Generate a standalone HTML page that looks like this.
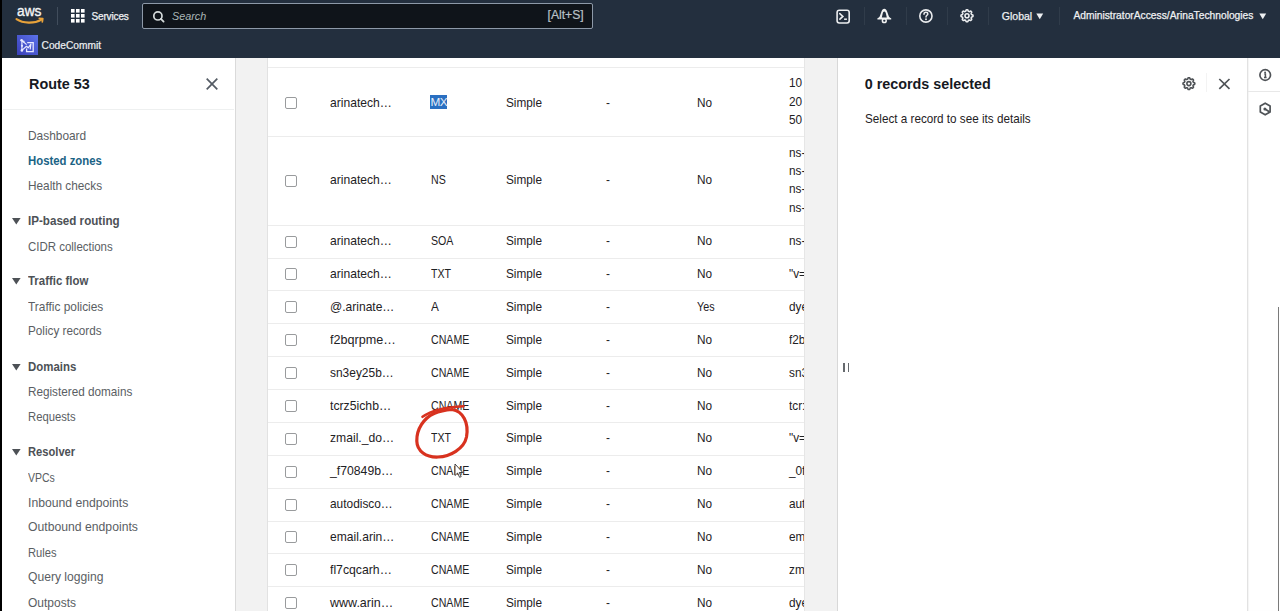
<!DOCTYPE html>
<html><head><meta charset="utf-8"><title>Route 53</title><style>
*{margin:0;padding:0;box-sizing:border-box}
html,body{width:1280px;height:611px;overflow:hidden;background:#fff;font-family:"Liberation Sans",sans-serif}
.t{position:absolute;white-space:nowrap;line-height:1}
.vsep{position:absolute;width:1px}
#nav{position:absolute;left:0;top:0;width:1280px;height:58px;background:#232f3e}
#search{position:absolute;left:142px;top:3px;width:451px;height:25.5px;background:#0f141a;border:1px solid #8d99a8;border-radius:2px}
#leftstrip{position:absolute;left:0;top:0;width:2px;height:611px;background:#000;z-index:5}
#lnav{position:absolute;left:0;top:58px;width:235px;height:553px;background:#fff}
#gut1{position:absolute;left:235px;top:58px;width:33px;height:553px;background:#f2f2f2;border-left:1px solid #dadada;border-right:1px solid #e2e2e2}
#tbl{position:absolute;left:268px;top:58px;width:537px;height:553px;background:#fff}
#gut2{z-index:3;position:absolute;left:804px;top:58px;width:34px;height:553px;background:#f2f2f2;border-left:1px solid #e6e6e6;border-right:1px solid #d8d8d8}
#rpanel{position:absolute;left:838px;top:58px;width:410px;height:553px;background:#fff}
#rail{position:absolute;left:1247px;top:58px;width:33px;height:553px;background:#fff;border-left:1px solid #e2e2e2;box-shadow:inset 1px 0 1px #f4f4f4}
.hl{position:absolute;left:268px;width:537px;height:1px;background:#ececec}
.cb{position:absolute;left:284.8px;width:12px;height:12px;border:1.5px solid #999b9d;border-radius:2px;background:#fff}
</style></head>
<body>
<div id="nav"></div><svg style="position:absolute;left:14px;top:4px" width="32" height="22" viewBox="0 0 32 22">
<text x="3" y="12.3" font-family="Liberation Sans" font-size="14" fill="#f4f5f6" textLength="24.5" lengthAdjust="spacingAndGlyphs" stroke="#f4f5f6" stroke-width="0.35">aws</text>
<path d="M2.5 15.2 C9 19.5 20 20 27.5 15.6" stroke="#e8a23a" stroke-width="2.1" fill="none" stroke-linecap="round"/>
<path d="M25.3 14.3 L28.8 14.6 L28.3 17.8" stroke="#e8a23a" stroke-width="1.7" fill="none" stroke-linecap="round" stroke-linejoin="round"/>
</svg><div class="vsep" style="left:57px;top:7px;height:18px;background:#414d5c"></div><svg style="position:absolute;left:71px;top:9.2px" width="14" height="14"><rect x="0" y="0" width="3.6" height="3.6" fill="#fff"/><rect x="5" y="0" width="3.6" height="3.6" fill="#fff"/><rect x="10" y="0" width="3.6" height="3.6" fill="#fff"/><rect x="0" y="5" width="3.6" height="3.6" fill="#fff"/><rect x="5" y="5" width="3.6" height="3.6" fill="#fff"/><rect x="10" y="5" width="3.6" height="3.6" fill="#fff"/><rect x="0" y="10" width="3.6" height="3.6" fill="#fff"/><rect x="5" y="10" width="3.6" height="3.6" fill="#fff"/><rect x="10" y="10" width="3.6" height="3.6" fill="#fff"/></svg><div class="t" style="left:91.5px;top:12.04px;font-size:10.00px;font-weight:normal;color:#eef0f2;font-style:normal;letter-spacing:-0.15px;-webkit-text-stroke:0.25px #eef0f2">Services</div>
<div id="search"></div><svg style="position:absolute;left:151.5px;top:9.5px" width="14" height="14" viewBox="0 0 14 14">
<circle cx="5.9" cy="5.9" r="4.1" stroke="#d5dbdb" stroke-width="1.7" fill="none"/>
<path d="M8.9 8.9 L11.6 11.6" stroke="#d5dbdb" stroke-width="1.8" stroke-linecap="round"/></svg><div class="t" style="left:172px;top:11.06px;font-size:10.80px;font-weight:normal;color:#aab7b8;font-style:italic;">Search</div>
<div class="t" style="left:547.5px;top:8.97px;font-size:12.20px;font-weight:normal;color:#b9c0c7;font-style:normal;-webkit-text-stroke:0.2px #b9c0c7">[Alt+S]</div>
<svg style="position:absolute;left:835px;top:8.5px" width="16" height="16" viewBox="0 0 16 16">
<rect x="2.1" y="1.2" width="12.1" height="12.8" rx="2.2" stroke="#eceef0" stroke-width="1.6" fill="none"/>
<path d="M4.8 4.6 L7.9 7.4 L4.9 10.2" stroke="#eceef0" stroke-width="1.6" fill="none" stroke-linecap="round"/>
<path d="M9.1 10.2 H11.9" stroke="#eceef0" stroke-width="1.5"/></svg><div class="vsep" style="left:863.5px;top:7px;height:18px;background:#303c4a"></div><svg style="position:absolute;left:870px;top:4px" width="30" height="24" viewBox="0 0 30 24">
<path fill-rule="evenodd" fill="#f2f3f3" d="M14.3 4.8 C15.6 4.8 16.6 5.8 17.2 7.8 L18.8 12.2 C19.3 13.2 20.3 13.8 21.2 14.2 L21.2 15.5 L7.4 15.5 L7.4 14.2 C8.3 13.8 9.3 13.2 9.8 12.2 L11.4 7.8 C12 5.8 13 4.8 14.3 4.8 Z M14.3 7.4 C13.5 7.4 13 8.2 12.7 9.4 L11.8 13.5 L16.8 13.5 L15.9 9.4 C15.6 8.2 15.1 7.4 14.3 7.4 Z"/>
<circle cx="14.3" cy="16.7" r="1.9" stroke="#f2f3f3" stroke-width="1.5" fill="none"/></svg><div class="vsep" style="left:905.5px;top:7px;height:18px;background:#303c4a"></div><svg style="position:absolute;left:918px;top:8.3px" width="16" height="16" viewBox="0 0 16 16">
<circle cx="7.9" cy="8" r="6.1" stroke="#e9ebed" stroke-width="1.6" fill="none"/>
<path d="M6 6.3 C6 5 6.9 4.3 7.9 4.3 C9 4.3 9.8 5 9.8 6 C9.8 7.2 8 7.4 8 8.9" stroke="#e9ebed" stroke-width="1.5" fill="none" stroke-linecap="round"/>
<circle cx="8" cy="11.2" r="0.95" fill="#e9ebed"/></svg><div class="vsep" style="left:946.5px;top:7px;height:18px;background:#303c4a"></div><svg style="position:absolute;left:959px;top:8px" width="16" height="16" viewBox="0 0 16 16"><path d="M8.00 1.80 L8.24 1.81 L8.47 1.84 L8.70 1.92 L8.90 2.13 L9.04 2.55 L9.16 2.98 L9.30 3.20 L9.46 3.31 L9.63 3.39 L9.80 3.46 L9.97 3.53 L10.14 3.59 L10.33 3.63 L10.59 3.57 L10.97 3.35 L11.38 3.15 L11.67 3.15 L11.88 3.25 L12.07 3.40 L12.24 3.56 L12.40 3.73 L12.55 3.92 L12.65 4.13 L12.65 4.42 L12.45 4.83 L12.23 5.21 L12.17 5.47 L12.21 5.66 L12.27 5.83 L12.34 6.00 L12.41 6.17 L12.49 6.34 L12.60 6.50 L12.82 6.64 L13.25 6.76 L13.67 6.90 L13.88 7.10 L13.96 7.33 L13.99 7.56 L14.00 7.80 L13.99 8.04 L13.96 8.27 L13.88 8.50 L13.67 8.70 L13.25 8.84 L12.82 8.96 L12.60 9.10 L12.49 9.26 L12.41 9.43 L12.34 9.60 L12.27 9.77 L12.21 9.94 L12.17 10.13 L12.23 10.39 L12.45 10.77 L12.65 11.18 L12.65 11.47 L12.55 11.68 L12.40 11.87 L12.24 12.04 L12.07 12.20 L11.88 12.35 L11.67 12.45 L11.38 12.45 L10.97 12.25 L10.59 12.03 L10.33 11.97 L10.14 12.01 L9.97 12.07 L9.80 12.14 L9.63 12.21 L9.46 12.29 L9.30 12.40 L9.16 12.62 L9.04 13.05 L8.90 13.47 L8.70 13.68 L8.47 13.76 L8.24 13.79 L8.00 13.80 L7.76 13.79 L7.53 13.76 L7.30 13.68 L7.10 13.47 L6.96 13.05 L6.84 12.62 L6.70 12.40 L6.54 12.29 L6.37 12.21 L6.20 12.14 L6.03 12.07 L5.86 12.01 L5.67 11.97 L5.41 12.03 L5.03 12.25 L4.62 12.45 L4.33 12.45 L4.12 12.35 L3.93 12.20 L3.76 12.04 L3.60 11.87 L3.45 11.68 L3.35 11.47 L3.35 11.18 L3.55 10.77 L3.77 10.39 L3.83 10.13 L3.79 9.94 L3.73 9.77 L3.66 9.60 L3.59 9.43 L3.51 9.26 L3.40 9.10 L3.18 8.96 L2.75 8.84 L2.33 8.70 L2.12 8.50 L2.04 8.27 L2.01 8.04 L2.00 7.80 L2.01 7.56 L2.04 7.33 L2.12 7.10 L2.33 6.90 L2.75 6.76 L3.18 6.64 L3.40 6.50 L3.51 6.34 L3.59 6.17 L3.66 6.00 L3.73 5.83 L3.79 5.66 L3.83 5.47 L3.77 5.21 L3.55 4.83 L3.35 4.42 L3.35 4.13 L3.45 3.92 L3.60 3.73 L3.76 3.56 L3.93 3.40 L4.12 3.25 L4.33 3.15 L4.62 3.15 L5.03 3.35 L5.41 3.57 L5.67 3.63 L5.86 3.59 L6.03 3.53 L6.20 3.46 L6.37 3.39 L6.54 3.31 L6.70 3.20 L6.84 2.98 L6.96 2.55 L7.10 2.13 L7.30 1.92 L7.53 1.84 L7.76 1.81 Z" stroke="#eceef0" stroke-width="1.6" fill="none" stroke-linejoin="round"/><circle cx="8" cy="7.8" r="2.0" stroke="#eceef0" stroke-width="1.6" fill="none"/></svg><div class="vsep" style="left:987.5px;top:7px;height:18px;background:#303c4a"></div><div class="t" style="left:1001.8px;top:10.81px;font-size:10.50px;font-weight:normal;color:#eef0f2;font-style:normal;-webkit-text-stroke:0.25px #eef0f2">Global</div>
<svg style="position:absolute;left:1035.8px;top:13px" width="8" height="7"><path d="M0.3 0.5 H7.2 L3.75 6.2 Z" fill="#eef0f2"/></svg><div class="vsep" style="left:1058.5px;top:7px;height:18px;background:#303c4a"></div><div class="t" style="left:1073.4px;top:11.02px;font-size:10.25px;font-weight:normal;color:#eef0f2;font-style:normal;-webkit-text-stroke:0.25px #eef0f2">AdministratorAccess/ArinaTechnologies</div>
<svg style="position:absolute;left:1259px;top:13px" width="8" height="7"><path d="M0.3 0.5 H7.2 L3.75 6.2 Z" fill="#eef0f2"/></svg><div style="position:absolute;left:17px;top:35px;width:20.5px;height:20px;background:linear-gradient(45deg,#3a3fb8,#5b72ea)"></div>
<svg style="position:absolute;left:17px;top:35px" width="20" height="20" viewBox="0 0 20 20">
<g fill="#e6e9ff"><circle cx="4.6" cy="5.2" r="1.3"/><circle cx="6.6" cy="6.6" r="1"/><circle cx="5" cy="10.8" r="1.1"/><circle cx="4.9" cy="15.4" r="1.3"/></g>
<path d="M4.6 5.2 L9.6 9.6 M4.9 5.5 L4.9 15.4 M4.9 15.4 L9.5 11.3 L11.2 12.8 L13.9 9 L13.2 14.3" stroke="#e6e9ff" stroke-width="1.2" fill="none" stroke-linejoin="round"/>
<path d="M10.2 7.6 H16.2 V16.6 H9.6 V13.6" stroke="#e6e9ff" stroke-width="1.3" fill="none"/></svg><div class="t" style="left:41.6px;top:40.67px;font-size:10.20px;font-weight:normal;color:#eef0f2;font-style:normal;-webkit-text-stroke:0.2px #eef0f2">CodeCommit</div>
<div id="leftstrip"></div><div id="lnav"></div><div id="gut1"></div><div id="tbl"></div><div id="gut2"></div><div id="rpanel"></div><div id="rail"></div><div style="position:absolute;left:3px;top:109px;width:231px;height:1px;background:#eef0f0"></div><div class="t" style="left:29px;top:76.91px;font-size:14.40px;font-weight:bold;color:#16191f;font-style:normal;">Route 53</div>
<svg style="position:absolute;left:204.5px;top:77px" width="14" height="14" viewBox="0 0 14 14">
<path d="M1.7 1.7 L12.3 12.3 M12.3 1.7 L1.7 12.3" stroke="#545b64" stroke-width="1.7"/></svg><div class="t" style="left:28.4px;top:128.61px;font-size:12.98px;font-weight:normal;color:#5a5e63;font-style:normal;transform:scaleX(0.9173);transform-origin:0 0;">Dashboard</div>
<div class="t" style="left:28.2px;top:154.99px;font-size:12.30px;font-weight:bold;color:#1b6385;font-style:normal;transform:scaleX(0.9235);transform-origin:0 0;">Hosted zones</div>
<div class="t" style="left:28.4px;top:178.61px;font-size:12.98px;font-weight:normal;color:#5a5e63;font-style:normal;transform:scaleX(0.9091);transform-origin:0 0;">Health checks</div>
<div class="t" style="left:27.6px;top:215.49px;font-size:12.30px;font-weight:bold;color:#4d5156;font-style:normal;transform:scaleX(0.9441);transform-origin:0 0;">IP-based routing</div>
<svg style="position:absolute;left:12.4px;top:218.20px" width="9" height="7"><path d="M0 0 H8.6 L4.3 6.6 Z" fill="#4d5156"/></svg><div class="t" style="left:28.4px;top:239.61px;font-size:12.98px;font-weight:normal;color:#5a5e63;font-style:normal;transform:scaleX(0.8836);transform-origin:0 0;">CIDR collections</div>
<div class="t" style="left:27.6px;top:274.99px;font-size:12.30px;font-weight:bold;color:#4d5156;font-style:normal;transform:scaleX(0.9292);transform-origin:0 0;">Traffic flow</div>
<svg style="position:absolute;left:12.4px;top:277.70px" width="9" height="7"><path d="M0 0 H8.6 L4.3 6.6 Z" fill="#4d5156"/></svg><div class="t" style="left:28.4px;top:299.91px;font-size:12.98px;font-weight:normal;color:#5a5e63;font-style:normal;transform:scaleX(0.9164);transform-origin:0 0;">Traffic policies</div>
<div class="t" style="left:28.4px;top:324.11px;font-size:12.98px;font-weight:normal;color:#5a5e63;font-style:normal;transform:scaleX(0.9045);transform-origin:0 0;">Policy records</div>
<div class="t" style="left:27.6px;top:361.09px;font-size:12.30px;font-weight:bold;color:#4d5156;font-style:normal;transform:scaleX(0.9292);transform-origin:0 0;">Domains</div>
<svg style="position:absolute;left:12.4px;top:363.80px" width="9" height="7"><path d="M0 0 H8.6 L4.3 6.6 Z" fill="#4d5156"/></svg><div class="t" style="left:28.4px;top:385.01px;font-size:12.98px;font-weight:normal;color:#5a5e63;font-style:normal;transform:scaleX(0.9045);transform-origin:0 0;">Registered domains</div>
<div class="t" style="left:28.4px;top:410.21px;font-size:12.98px;font-weight:normal;color:#5a5e63;font-style:normal;transform:scaleX(0.8682);transform-origin:0 0;">Requests</div>
<div class="t" style="left:27.6px;top:446.09px;font-size:12.30px;font-weight:bold;color:#4d5156;font-style:normal;transform:scaleX(0.9079);transform-origin:0 0;">Resolver</div>
<svg style="position:absolute;left:12.4px;top:448.80px" width="9" height="7"><path d="M0 0 H8.6 L4.3 6.6 Z" fill="#4d5156"/></svg><div class="t" style="left:28.4px;top:470.81px;font-size:12.98px;font-weight:normal;color:#5a5e63;font-style:normal;transform:scaleX(0.8091);transform-origin:0 0;">VPCs</div>
<div class="t" style="left:28.4px;top:496.01px;font-size:12.98px;font-weight:normal;color:#5a5e63;font-style:normal;transform:scaleX(0.9400);transform-origin:0 0;">Inbound endpoints</div>
<div class="t" style="left:28.4px;top:520.31px;font-size:12.98px;font-weight:normal;color:#5a5e63;font-style:normal;transform:scaleX(0.9409);transform-origin:0 0;">Outbound endpoints</div>
<div class="t" style="left:28.4px;top:545.51px;font-size:12.98px;font-weight:normal;color:#5a5e63;font-style:normal;transform:scaleX(0.8618);transform-origin:0 0;">Rules</div>
<div class="t" style="left:28.4px;top:570.31px;font-size:12.98px;font-weight:normal;color:#5a5e63;font-style:normal;transform:scaleX(0.9336);transform-origin:0 0;">Query logging</div>
<div class="t" style="left:28.4px;top:595.51px;font-size:12.98px;font-weight:normal;color:#5a5e63;font-style:normal;transform:scaleX(0.9245);transform-origin:0 0;">Outposts</div>
<div class="hl" style="top:67.4px"></div><div class="cb" style="top:96.60px"></div><div class="t" style="left:330px;top:95.51px;font-size:12.98px;font-weight:normal;color:#1e2124;font-style:normal;transform:scaleX(0.9336);transform-origin:0 0;">arinatech…</div>
<div style="position:absolute;left:430px;top:94.6px;width:17px;height:14px;background:#2a6fc1"></div><div class="t" style="left:430.5px;top:96.51px;font-size:11.80px;font-weight:normal;color:#e8f0fa;font-style:normal;letter-spacing:-0.6px">MX</div>
<div class="t" style="left:505.5px;top:95.51px;font-size:12.98px;font-weight:normal;color:#1e2124;font-style:normal;transform:scaleX(0.9091);transform-origin:0 0;">Simple</div>
<div class="t" style="left:605.5px;top:95.51px;font-size:12.98px;font-weight:normal;color:#1e2124;font-style:normal;transform:scaleX(0.9091);transform-origin:0 0;">-</div>
<div class="t" style="left:697px;top:95.51px;font-size:12.98px;font-weight:normal;color:#1e2124;font-style:normal;transform:scaleX(0.9091);transform-origin:0 0;">No</div>
<div class="t" style="left:789px;top:76.41px;font-size:12.98px;font-weight:normal;color:#1e2124;font-style:normal;transform:scaleX(0.9091);transform-origin:0 0;">10</div>
<div class="t" style="left:789px;top:94.71px;font-size:12.98px;font-weight:normal;color:#1e2124;font-style:normal;transform:scaleX(0.9091);transform-origin:0 0;">20</div>
<div class="t" style="left:789px;top:113.01px;font-size:12.98px;font-weight:normal;color:#1e2124;font-style:normal;transform:scaleX(0.9091);transform-origin:0 0;">50</div>
<div class="hl" style="top:135.8px"></div><div class="cb" style="top:174.70px"></div><div class="t" style="left:330px;top:173.31px;font-size:12.98px;font-weight:normal;color:#1e2124;font-style:normal;transform:scaleX(0.9336);transform-origin:0 0;">arinatech…</div>
<div class="t" style="left:430.5px;top:173.31px;font-size:12.98px;font-weight:normal;color:#1e2124;font-style:normal;transform:scaleX(0.8182);transform-origin:0 0;">NS</div>
<div class="t" style="left:505.5px;top:173.31px;font-size:12.98px;font-weight:normal;color:#1e2124;font-style:normal;transform:scaleX(0.9091);transform-origin:0 0;">Simple</div>
<div class="t" style="left:605.5px;top:173.31px;font-size:12.98px;font-weight:normal;color:#1e2124;font-style:normal;transform:scaleX(0.9091);transform-origin:0 0;">-</div>
<div class="t" style="left:697px;top:173.31px;font-size:12.98px;font-weight:normal;color:#1e2124;font-style:normal;transform:scaleX(0.9091);transform-origin:0 0;">No</div>
<div class="t" style="left:789px;top:145.86px;font-size:12.98px;font-weight:normal;color:#1e2124;font-style:normal;transform:scaleX(0.9091);transform-origin:0 0;">ns-</div>
<div class="t" style="left:789px;top:164.16px;font-size:12.98px;font-weight:normal;color:#1e2124;font-style:normal;transform:scaleX(0.9091);transform-origin:0 0;">ns-</div>
<div class="t" style="left:789px;top:182.46px;font-size:12.98px;font-weight:normal;color:#1e2124;font-style:normal;transform:scaleX(0.9091);transform-origin:0 0;">ns-</div>
<div class="t" style="left:789px;top:200.76px;font-size:12.98px;font-weight:normal;color:#1e2124;font-style:normal;transform:scaleX(0.9091);transform-origin:0 0;">ns-</div>
<div class="hl" style="top:224.6px"></div><div class="cb" style="top:235.54px"></div><div class="t" style="left:330px;top:234.15px;font-size:12.98px;font-weight:normal;color:#1e2124;font-style:normal;transform:scaleX(0.9336);transform-origin:0 0;">arinatech…</div>
<div class="t" style="left:430.5px;top:234.15px;font-size:12.98px;font-weight:normal;color:#1e2124;font-style:normal;transform:scaleX(0.8182);transform-origin:0 0;">SOA</div>
<div class="t" style="left:505.5px;top:234.15px;font-size:12.98px;font-weight:normal;color:#1e2124;font-style:normal;transform:scaleX(0.9091);transform-origin:0 0;">Simple</div>
<div class="t" style="left:605.5px;top:234.15px;font-size:12.98px;font-weight:normal;color:#1e2124;font-style:normal;transform:scaleX(0.9091);transform-origin:0 0;">-</div>
<div class="t" style="left:697px;top:234.15px;font-size:12.98px;font-weight:normal;color:#1e2124;font-style:normal;transform:scaleX(0.9091);transform-origin:0 0;">No</div>
<div class="t" style="left:789px;top:234.15px;font-size:12.98px;font-weight:normal;color:#1e2124;font-style:normal;transform:scaleX(0.9091);transform-origin:0 0;">ns-</div>
<div class="hl" style="top:257.5px"></div><div class="cb" style="top:268.42px"></div><div class="t" style="left:330px;top:267.03px;font-size:12.98px;font-weight:normal;color:#1e2124;font-style:normal;transform:scaleX(0.9336);transform-origin:0 0;">arinatech…</div>
<div class="t" style="left:430.5px;top:267.03px;font-size:12.98px;font-weight:normal;color:#1e2124;font-style:normal;transform:scaleX(0.8182);transform-origin:0 0;">TXT</div>
<div class="t" style="left:505.5px;top:267.03px;font-size:12.98px;font-weight:normal;color:#1e2124;font-style:normal;transform:scaleX(0.9091);transform-origin:0 0;">Simple</div>
<div class="t" style="left:605.5px;top:267.03px;font-size:12.98px;font-weight:normal;color:#1e2124;font-style:normal;transform:scaleX(0.9091);transform-origin:0 0;">-</div>
<div class="t" style="left:697px;top:267.03px;font-size:12.98px;font-weight:normal;color:#1e2124;font-style:normal;transform:scaleX(0.9091);transform-origin:0 0;">No</div>
<div class="t" style="left:789px;top:267.03px;font-size:12.98px;font-weight:normal;color:#1e2124;font-style:normal;transform:scaleX(0.9091);transform-origin:0 0;">"v=</div>
<div class="hl" style="top:290.4px"></div><div class="cb" style="top:301.30px"></div><div class="t" style="left:330px;top:299.91px;font-size:12.98px;font-weight:normal;color:#1e2124;font-style:normal;transform:scaleX(0.9282);transform-origin:0 0;">@.arinate…</div>
<div class="t" style="left:430.5px;top:299.91px;font-size:12.98px;font-weight:normal;color:#1e2124;font-style:normal;transform:scaleX(0.9091);transform-origin:0 0;">A</div>
<div class="t" style="left:505.5px;top:299.91px;font-size:12.98px;font-weight:normal;color:#1e2124;font-style:normal;transform:scaleX(0.9091);transform-origin:0 0;">Simple</div>
<div class="t" style="left:605.5px;top:299.91px;font-size:12.98px;font-weight:normal;color:#1e2124;font-style:normal;transform:scaleX(0.9091);transform-origin:0 0;">-</div>
<div class="t" style="left:697px;top:299.91px;font-size:12.98px;font-weight:normal;color:#1e2124;font-style:normal;transform:scaleX(0.8273);transform-origin:0 0;">Yes</div>
<div class="t" style="left:789px;top:299.91px;font-size:12.98px;font-weight:normal;color:#1e2124;font-style:normal;transform:scaleX(0.9091);transform-origin:0 0;">dye</div>
<div class="hl" style="top:323.2px"></div><div class="cb" style="top:334.18px"></div><div class="t" style="left:330px;top:332.79px;font-size:12.98px;font-weight:normal;color:#1e2124;font-style:normal;transform:scaleX(0.9709);transform-origin:0 0;">f2bqrpme…</div>
<div class="t" style="left:430.5px;top:332.79px;font-size:12.98px;font-weight:normal;color:#1e2124;font-style:normal;transform:scaleX(0.8182);transform-origin:0 0;">CNAME</div>
<div class="t" style="left:505.5px;top:332.79px;font-size:12.98px;font-weight:normal;color:#1e2124;font-style:normal;transform:scaleX(0.9091);transform-origin:0 0;">Simple</div>
<div class="t" style="left:605.5px;top:332.79px;font-size:12.98px;font-weight:normal;color:#1e2124;font-style:normal;transform:scaleX(0.9091);transform-origin:0 0;">-</div>
<div class="t" style="left:697px;top:332.79px;font-size:12.98px;font-weight:normal;color:#1e2124;font-style:normal;transform:scaleX(0.9091);transform-origin:0 0;">No</div>
<div class="t" style="left:789px;top:332.79px;font-size:12.98px;font-weight:normal;color:#1e2124;font-style:normal;transform:scaleX(0.9091);transform-origin:0 0;">f2b</div>
<div class="hl" style="top:356.1px"></div><div class="cb" style="top:367.06px"></div><div class="t" style="left:330px;top:365.67px;font-size:12.98px;font-weight:normal;color:#1e2124;font-style:normal;transform:scaleX(0.9209);transform-origin:0 0;">sn3ey25b…</div>
<div class="t" style="left:430.5px;top:365.67px;font-size:12.98px;font-weight:normal;color:#1e2124;font-style:normal;transform:scaleX(0.8182);transform-origin:0 0;">CNAME</div>
<div class="t" style="left:505.5px;top:365.67px;font-size:12.98px;font-weight:normal;color:#1e2124;font-style:normal;transform:scaleX(0.9091);transform-origin:0 0;">Simple</div>
<div class="t" style="left:605.5px;top:365.67px;font-size:12.98px;font-weight:normal;color:#1e2124;font-style:normal;transform:scaleX(0.9091);transform-origin:0 0;">-</div>
<div class="t" style="left:697px;top:365.67px;font-size:12.98px;font-weight:normal;color:#1e2124;font-style:normal;transform:scaleX(0.9091);transform-origin:0 0;">No</div>
<div class="t" style="left:789px;top:365.67px;font-size:12.98px;font-weight:normal;color:#1e2124;font-style:normal;transform:scaleX(0.9091);transform-origin:0 0;">sn3</div>
<div class="hl" style="top:389.0px"></div><div class="cb" style="top:399.94px"></div><div class="t" style="left:330px;top:398.55px;font-size:12.98px;font-weight:normal;color:#1e2124;font-style:normal;transform:scaleX(0.9436);transform-origin:0 0;">tcrz5ichb…</div>
<div class="t" style="left:430.5px;top:398.55px;font-size:12.98px;font-weight:normal;color:#1e2124;font-style:normal;transform:scaleX(0.8182);transform-origin:0 0;">CNAME</div>
<div class="t" style="left:505.5px;top:398.55px;font-size:12.98px;font-weight:normal;color:#1e2124;font-style:normal;transform:scaleX(0.9091);transform-origin:0 0;">Simple</div>
<div class="t" style="left:605.5px;top:398.55px;font-size:12.98px;font-weight:normal;color:#1e2124;font-style:normal;transform:scaleX(0.9091);transform-origin:0 0;">-</div>
<div class="t" style="left:697px;top:398.55px;font-size:12.98px;font-weight:normal;color:#1e2124;font-style:normal;transform:scaleX(0.9091);transform-origin:0 0;">No</div>
<div class="t" style="left:789px;top:398.55px;font-size:12.98px;font-weight:normal;color:#1e2124;font-style:normal;transform:scaleX(0.9091);transform-origin:0 0;">tcr:</div>
<div class="hl" style="top:421.9px"></div><div class="cb" style="top:432.82px"></div><div class="t" style="left:330px;top:431.43px;font-size:12.98px;font-weight:normal;color:#1e2124;font-style:normal;transform:scaleX(0.9364);transform-origin:0 0;">zmail._do…</div>
<div class="t" style="left:430.5px;top:431.43px;font-size:12.98px;font-weight:normal;color:#1e2124;font-style:normal;transform:scaleX(0.8182);transform-origin:0 0;">TXT</div>
<div class="t" style="left:505.5px;top:431.43px;font-size:12.98px;font-weight:normal;color:#1e2124;font-style:normal;transform:scaleX(0.9091);transform-origin:0 0;">Simple</div>
<div class="t" style="left:605.5px;top:431.43px;font-size:12.98px;font-weight:normal;color:#1e2124;font-style:normal;transform:scaleX(0.9091);transform-origin:0 0;">-</div>
<div class="t" style="left:697px;top:431.43px;font-size:12.98px;font-weight:normal;color:#1e2124;font-style:normal;transform:scaleX(0.9091);transform-origin:0 0;">No</div>
<div class="t" style="left:789px;top:431.43px;font-size:12.98px;font-weight:normal;color:#1e2124;font-style:normal;transform:scaleX(0.9091);transform-origin:0 0;">"v=</div>
<div class="hl" style="top:454.8px"></div><div class="cb" style="top:465.70px"></div><div class="t" style="left:330px;top:464.31px;font-size:12.98px;font-weight:normal;color:#1e2124;font-style:normal;transform:scaleX(0.9436);transform-origin:0 0;">_f70849b…</div>
<div class="t" style="left:430.5px;top:464.31px;font-size:12.98px;font-weight:normal;color:#1e2124;font-style:normal;transform:scaleX(0.8182);transform-origin:0 0;">CNAME</div>
<div class="t" style="left:505.5px;top:464.31px;font-size:12.98px;font-weight:normal;color:#1e2124;font-style:normal;transform:scaleX(0.9091);transform-origin:0 0;">Simple</div>
<div class="t" style="left:605.5px;top:464.31px;font-size:12.98px;font-weight:normal;color:#1e2124;font-style:normal;transform:scaleX(0.9091);transform-origin:0 0;">-</div>
<div class="t" style="left:697px;top:464.31px;font-size:12.98px;font-weight:normal;color:#1e2124;font-style:normal;transform:scaleX(0.9091);transform-origin:0 0;">No</div>
<div class="t" style="left:789px;top:464.31px;font-size:12.98px;font-weight:normal;color:#1e2124;font-style:normal;transform:scaleX(0.9091);transform-origin:0 0;">_0f</div>
<div class="hl" style="top:487.6px"></div><div class="cb" style="top:498.58px"></div><div class="t" style="left:330px;top:497.19px;font-size:12.98px;font-weight:normal;color:#1e2124;font-style:normal;transform:scaleX(0.9164);transform-origin:0 0;">autodisco…</div>
<div class="t" style="left:430.5px;top:497.19px;font-size:12.98px;font-weight:normal;color:#1e2124;font-style:normal;transform:scaleX(0.8182);transform-origin:0 0;">CNAME</div>
<div class="t" style="left:505.5px;top:497.19px;font-size:12.98px;font-weight:normal;color:#1e2124;font-style:normal;transform:scaleX(0.9091);transform-origin:0 0;">Simple</div>
<div class="t" style="left:605.5px;top:497.19px;font-size:12.98px;font-weight:normal;color:#1e2124;font-style:normal;transform:scaleX(0.9091);transform-origin:0 0;">-</div>
<div class="t" style="left:697px;top:497.19px;font-size:12.98px;font-weight:normal;color:#1e2124;font-style:normal;transform:scaleX(0.9091);transform-origin:0 0;">No</div>
<div class="t" style="left:789px;top:497.19px;font-size:12.98px;font-weight:normal;color:#1e2124;font-style:normal;transform:scaleX(0.9091);transform-origin:0 0;">aut</div>
<div class="hl" style="top:520.5px"></div><div class="cb" style="top:531.46px"></div><div class="t" style="left:330px;top:530.07px;font-size:12.98px;font-weight:normal;color:#1e2124;font-style:normal;transform:scaleX(0.9300);transform-origin:0 0;">email.arin…</div>
<div class="t" style="left:430.5px;top:530.07px;font-size:12.98px;font-weight:normal;color:#1e2124;font-style:normal;transform:scaleX(0.8182);transform-origin:0 0;">CNAME</div>
<div class="t" style="left:505.5px;top:530.07px;font-size:12.98px;font-weight:normal;color:#1e2124;font-style:normal;transform:scaleX(0.9091);transform-origin:0 0;">Simple</div>
<div class="t" style="left:605.5px;top:530.07px;font-size:12.98px;font-weight:normal;color:#1e2124;font-style:normal;transform:scaleX(0.9091);transform-origin:0 0;">-</div>
<div class="t" style="left:697px;top:530.07px;font-size:12.98px;font-weight:normal;color:#1e2124;font-style:normal;transform:scaleX(0.9091);transform-origin:0 0;">No</div>
<div class="t" style="left:789px;top:530.07px;font-size:12.98px;font-weight:normal;color:#1e2124;font-style:normal;transform:scaleX(0.9091);transform-origin:0 0;">em</div>
<div class="hl" style="top:553.4px"></div><div class="cb" style="top:564.34px"></div><div class="t" style="left:330px;top:562.95px;font-size:12.98px;font-weight:normal;color:#1e2124;font-style:normal;transform:scaleX(0.9436);transform-origin:0 0;">fl7cqcarh…</div>
<div class="t" style="left:430.5px;top:562.95px;font-size:12.98px;font-weight:normal;color:#1e2124;font-style:normal;transform:scaleX(0.8182);transform-origin:0 0;">CNAME</div>
<div class="t" style="left:505.5px;top:562.95px;font-size:12.98px;font-weight:normal;color:#1e2124;font-style:normal;transform:scaleX(0.9091);transform-origin:0 0;">Simple</div>
<div class="t" style="left:605.5px;top:562.95px;font-size:12.98px;font-weight:normal;color:#1e2124;font-style:normal;transform:scaleX(0.9091);transform-origin:0 0;">-</div>
<div class="t" style="left:697px;top:562.95px;font-size:12.98px;font-weight:normal;color:#1e2124;font-style:normal;transform:scaleX(0.9091);transform-origin:0 0;">No</div>
<div class="t" style="left:789px;top:562.95px;font-size:12.98px;font-weight:normal;color:#1e2124;font-style:normal;transform:scaleX(0.9091);transform-origin:0 0;">zm</div>
<div class="hl" style="top:586.3px"></div><div class="cb" style="top:597.22px"></div><div class="t" style="left:330px;top:595.83px;font-size:12.98px;font-weight:normal;color:#1e2124;font-style:normal;transform:scaleX(0.9636);transform-origin:0 0;">www.arin…</div>
<div class="t" style="left:430.5px;top:595.83px;font-size:12.98px;font-weight:normal;color:#1e2124;font-style:normal;transform:scaleX(0.8182);transform-origin:0 0;">CNAME</div>
<div class="t" style="left:505.5px;top:595.83px;font-size:12.98px;font-weight:normal;color:#1e2124;font-style:normal;transform:scaleX(0.9091);transform-origin:0 0;">Simple</div>
<div class="t" style="left:605.5px;top:595.83px;font-size:12.98px;font-weight:normal;color:#1e2124;font-style:normal;transform:scaleX(0.9091);transform-origin:0 0;">-</div>
<div class="t" style="left:697px;top:595.83px;font-size:12.98px;font-weight:normal;color:#1e2124;font-style:normal;transform:scaleX(0.9091);transform-origin:0 0;">No</div>
<div class="t" style="left:789px;top:595.83px;font-size:12.98px;font-weight:normal;color:#1e2124;font-style:normal;transform:scaleX(0.9091);transform-origin:0 0;">dye</div>
<svg style="position:absolute;left:454px;top:463px;z-index:4" width="10" height="16" viewBox="0 0 10 16">
<path d="M1 1 L1 12.5 L3.6 10 L5.6 14.3 L7.2 13.6 L5.3 9.5 L8.8 9.5 Z" fill="#fff" stroke="#333" stroke-width="0.9" stroke-linejoin="round"/></svg><div style="position:absolute;left:843.2px;top:362.6px;width:1.5px;height:9.6px;background:#666a6e"></div><div style="position:absolute;left:847.6px;top:362.6px;width:1.7px;height:9.6px;background:#666a6e"></div><div class="t" style="left:864.7px;top:76.95px;font-size:14.35px;font-weight:bold;color:#16191f;font-style:normal;">0 records selected</div>
<div class="t" style="left:864.5px;top:112.81px;font-size:12.87px;font-weight:normal;color:#1e2124;font-style:normal;transform:scaleX(0.9091);transform-origin:0 0;">Select a record to see its details</div>
<svg style="position:absolute;left:1181px;top:76px" width="16" height="16" viewBox="0 0 16 16"><path d="M7.90 1.70 L8.13 1.71 L8.36 1.74 L8.58 1.82 L8.78 2.03 L8.92 2.45 L9.03 2.88 L9.17 3.10 L9.33 3.21 L9.49 3.28 L9.66 3.35 L9.83 3.42 L10.00 3.48 L10.19 3.52 L10.44 3.46 L10.82 3.23 L11.22 3.03 L11.50 3.03 L11.72 3.13 L11.90 3.27 L12.07 3.43 L12.23 3.60 L12.37 3.78 L12.47 4.00 L12.47 4.28 L12.27 4.68 L12.04 5.06 L11.98 5.31 L12.02 5.50 L12.08 5.67 L12.15 5.84 L12.22 6.01 L12.29 6.17 L12.40 6.33 L12.62 6.47 L13.05 6.58 L13.47 6.72 L13.68 6.92 L13.76 7.14 L13.79 7.37 L13.80 7.60 L13.79 7.83 L13.76 8.06 L13.68 8.28 L13.47 8.48 L13.05 8.62 L12.62 8.73 L12.40 8.87 L12.29 9.03 L12.22 9.19 L12.15 9.36 L12.08 9.53 L12.02 9.70 L11.98 9.89 L12.04 10.14 L12.27 10.52 L12.47 10.92 L12.47 11.20 L12.37 11.42 L12.23 11.60 L12.07 11.77 L11.90 11.93 L11.72 12.07 L11.50 12.17 L11.22 12.17 L10.82 11.97 L10.44 11.74 L10.19 11.68 L10.00 11.72 L9.83 11.78 L9.66 11.85 L9.49 11.92 L9.33 11.99 L9.17 12.10 L9.03 12.32 L8.92 12.75 L8.78 13.17 L8.58 13.38 L8.36 13.46 L8.13 13.49 L7.90 13.50 L7.67 13.49 L7.44 13.46 L7.22 13.38 L7.02 13.17 L6.88 12.75 L6.77 12.32 L6.63 12.10 L6.47 11.99 L6.31 11.92 L6.14 11.85 L5.97 11.78 L5.80 11.72 L5.61 11.68 L5.36 11.74 L4.98 11.97 L4.58 12.17 L4.30 12.17 L4.08 12.07 L3.90 11.93 L3.73 11.77 L3.57 11.60 L3.43 11.42 L3.33 11.20 L3.33 10.92 L3.53 10.52 L3.76 10.14 L3.82 9.89 L3.78 9.70 L3.72 9.53 L3.65 9.36 L3.58 9.19 L3.51 9.03 L3.40 8.87 L3.18 8.73 L2.75 8.62 L2.33 8.48 L2.12 8.28 L2.04 8.06 L2.01 7.83 L2.00 7.60 L2.01 7.37 L2.04 7.14 L2.12 6.92 L2.33 6.72 L2.75 6.58 L3.18 6.47 L3.40 6.33 L3.51 6.17 L3.58 6.01 L3.65 5.84 L3.72 5.67 L3.78 5.50 L3.82 5.31 L3.76 5.06 L3.53 4.68 L3.33 4.28 L3.33 4.00 L3.43 3.78 L3.57 3.60 L3.73 3.43 L3.90 3.27 L4.08 3.13 L4.30 3.03 L4.58 3.03 L4.98 3.23 L5.36 3.46 L5.61 3.52 L5.80 3.48 L5.97 3.42 L6.14 3.35 L6.31 3.28 L6.47 3.21 L6.63 3.10 L6.77 2.88 L6.88 2.45 L7.02 2.03 L7.22 1.82 L7.44 1.74 L7.67 1.71 Z" stroke="#4f5357" stroke-width="1.6" fill="none" stroke-linejoin="round"/><circle cx="7.9" cy="7.6" r="2.0" stroke="#4f5357" stroke-width="1.6" fill="none"/></svg><div class="vsep" style="left:1206px;top:73px;height:19px;background:#f3f3f3"></div><svg style="position:absolute;left:1217px;top:77px" width="14" height="14" viewBox="0 0 14 14">
<path d="M2.3 2.0 L12.5 11.8 M12.5 2.0 L2.3 11.8" stroke="#4f5357" stroke-width="1.7"/></svg><svg style="position:absolute;left:1257px;top:66.5px" width="16" height="16" viewBox="0 0 16 16">
<circle cx="8.2" cy="8" r="5.3" stroke="#4f5357" stroke-width="1.7" fill="none"/>
<circle cx="8.1" cy="5.4" r="0.95" fill="#4f5357"/>
<path d="M7.3 7.1 H8.4 V10.4 M7 10.6 H9.6" stroke="#4f5357" stroke-width="1.5" fill="none"/></svg><div style="position:absolute;left:1248px;top:91px;width:32px;height:1px;background:#e8e8e8"></div><svg style="position:absolute;left:1257px;top:100.5px" width="16" height="16" viewBox="0 0 16 16">
<path d="M8.2 2.2 L13.1 5.1 V10.9 L8.2 13.8 L3.3 10.9 V5.1 Z" stroke="#4f5357" stroke-width="1.7" fill="none" stroke-linejoin="round"/>
<circle cx="7.9" cy="7.9" r="1.5" fill="#4f5357"/><path d="M8 8 L12.3 10.7" stroke="#4f5357" stroke-width="1.7"/></svg><div style="position:absolute;left:1277.5px;top:307px;width:1.5px;height:310px;background:#7a7a7a"></div><svg style="position:absolute;left:400px;top:390px;z-index:4" width="90" height="100" viewBox="0 0 90 100">
<path d="M22.5 26.8 C30 21.5 45 17 63.5 16.2" stroke="#d8321f" stroke-width="2.6" fill="none" stroke-linecap="round"/>
<path d="M52 19.5 C63 21 69 33 66.5 47 C64 59 50 66.5 38 67 C26 67.5 17 61 16.8 51 C16.5 39 24 28 34 23.5 C40 21 46 20 52 19.5" stroke="#d8321f" stroke-width="3.2" fill="none" stroke-linecap="round"/></svg>
</body></html>
